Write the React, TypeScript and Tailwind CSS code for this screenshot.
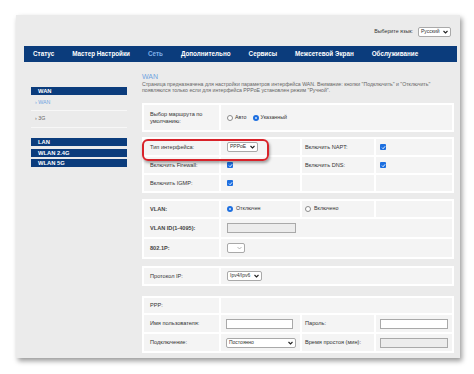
import React from "react";

const font = { fontFamily: '"Liberation Sans", Arial, sans-serif' };

function Chevron() {
  return (
    <svg width="5" height="4" viewBox="0 0 10 7" className="shrink-0">
      <path d="M1 1.5 L5 5.5 L9 1.5" fill="none" stroke="#222" strokeWidth="2.2" />
    </svg>
  );
}

function Select({ text, w, light }: { text: string; w: string; light?: boolean }) {
  return (
    <div className={`${w} h-[10px] bg-white border border-[#a9a9a9] rounded-[2px] flex items-center justify-between px-[2px] text-[5px] text-[#333]`}>
      <span>{text}</span>
      {light ? (
        <svg width="5" height="4" viewBox="0 0 10 7"><path d="M1 1.5 L5 5.5 L9 1.5" fill="none" stroke="#999" strokeWidth="1.4" /></svg>
      ) : (
        <Chevron />
      )}
    </div>
  );
}

function Check() {
  return (
    <span className="w-[6px] h-[6px] rounded-[1px] bg-[#1d6fe0] flex items-center justify-center">
      <svg width="5" height="5" viewBox="0 0 10 10">
        <path d="M2 5.2 L4.2 7.4 L8.2 2.6" fill="none" stroke="white" strokeWidth="1.8" />
      </svg>
    </span>
  );
}

function Radio({ on }: { on?: boolean }) {
  return on ? (
    <span className="w-[6px] h-[6px] rounded-full bg-[#1d6fe0] flex items-center justify-center">
      <span className="w-[2px] h-[2px] rounded-full bg-[#cfe0fb]" />
    </span>
  ) : (
    <span className="w-[6px] h-[6px] rounded-full bg-white border border-[#8a8a8a]" />
  );
}

function Input({ w, gray }: { w: string; gray?: boolean }) {
  return <div className={`${w} h-[10px] border border-[#a9a9a9] ${gray ? "bg-[#ececec]" : "bg-white"}`} />;
}

const cell = "bg-[#f4f4f4] flex items-center";
const lab = `${cell} pl-[6px] text-[5.6px] text-[#333]`;
const lab2 = `${cell} pl-[3px] text-[5.6px] text-[#333]`;
const val = `${cell} pl-[6px]`;
const val2 = `${cell} pl-[4px]`;
const cols = "grid grid-cols-[75px_79px_72px_76px] gap-[2px]";

export default function App() {
  return (
    <div className="min-h-screen bg-white pt-[15px] pl-[16px]" style={font}>
      <div className="w-[444px] h-[343px] bg-[#ebebeb] shadow-[2px_3px_5px_rgba(0,0,0,0.4)] flex flex-col">
        {/* language */}
        <div className="h-[31px] flex items-center justify-end pr-[9px] gap-[5px] pt-[2px]">
          <span className="text-[5.3px] text-[#333]">Выберите язык:</span>
          <Select text="Русский" w="w-[33px]" />
        </div>

        {/* top menu */}
        <div className="ml-[8px] mr-[3px] h-[16px] bg-[#0b3c7c] flex items-center pl-[9px] gap-[18px] text-[6.3px] font-bold text-white">
          <span>Статус</span>
          <span>Мастер Настройки</span>
          <span className="text-[#7fb0ea]">Сеть</span>
          <span>Дополнительно</span>
          <span>Сервисы</span>
          <span>Межсетевой Экран</span>
          <span>Обслуживание</span>
        </div>

        <div className="flex">
          {/* side menu */}
          <div className="ml-[15px] w-[96px] pt-[25px] flex flex-col">
            <div className="h-[8px] bg-[#0b3c7c] text-white font-bold text-[5.8px] pl-[7px] flex items-center">WAN</div>
            <div className="h-[16px] border-b border-[#f7f7f7] flex items-center pl-[4px] text-[5.3px] text-[#6fa3e0]">› WAN</div>
            <div className="h-[17px] border-b border-[#f7f7f7] flex items-center pl-[4px] text-[5.3px] text-[#666]">› 3G</div>
            <div className="mt-[10px] h-[8px] bg-[#0b3c7c] text-white font-bold text-[5.8px] pl-[7px] flex items-center">LAN</div>
            <div className="mt-[3px] h-[8px] bg-[#0b3c7c] text-white font-bold text-[5.8px] pl-[7px] flex items-center">WLAN 2.4G</div>
            <div className="mt-[2px] h-[8px] bg-[#0b3c7c] text-white font-bold text-[5.8px] pl-[7px] flex items-center">WLAN 5G</div>
          </div>

          {/* content */}
          <div className="ml-[15px] w-[313px] pt-[10px] flex flex-col">
            <div className="text-[7px] leading-[9px] text-[#6fa3e0]">WAN</div>
            <div className="mt-[1px] text-[5.2px] leading-[5.5px] text-[#666]">
              Страница предназначена для настройки параметров интерфейса WAN. Внимание: кнопки "Подключить" и "Отключить"
              <br />
              появляются только если для интерфейса PPPoE установлен режим "Ручной".
            </div>

            {/* route */}
            <div className="mt-[10px] w-[312px] bg-white p-[2px]">
              <div className="grid grid-cols-[75px_231px] gap-[2px]">
                <div className={`${lab} h-[25px] leading-[6.5px]`}>
                  Выбор маршрута по
                  <br />
                  умолчанию:
                </div>
                <div className={`${val} gap-[2px] text-[5.3px] text-[#333]`}>
                  <Radio />
                  <span>Авто</span>
                  <span className="ml-[2px]" />
                  <Radio on />
                  <span>Указанный</span>
                </div>
              </div>
            </div>

            {/* interface */}
            <div className="relative mt-[5px] w-[312px] bg-white p-[2px]">
              <div className={`${cols} auto-rows-[16px]`}>
                <div className={lab}>Тип интерфейса:</div>
                <div className={val}>
                  <Select text="PPPoE" w="w-[31px]" />
                </div>
                <div className={lab2}>Включить NAPT:</div>
                <div className={val2}>
                  <Check />
                </div>
                <div className={lab}>Включить Firewall:</div>
                <div className={val}>
                  <Check />
                </div>
                <div className={lab2}>Включить DNS:</div>
                <div className={val2}>
                  <Check />
                </div>
                <div className={lab}>Включить IGMP:</div>
                <div className={val}>
                  <Check />
                </div>
                <div className={cell} />
                <div className={cell} />
              </div>
              <div className="absolute left-[0px] top-[2px] w-[127px] h-[22px] border-2 border-[#d8232a] rounded-[6px] shadow-[1px_2px_3px_rgba(0,0,0,0.35)]" />
            </div>

            {/* vlan */}
            <div className="mt-[6px] w-[312px] bg-white p-[2px]">
              <div className={`${cols} grid-rows-[16px_18px_18px]`}>
                <div className={`${lab} font-bold text-[#444]`}>VLAN:</div>
                <div className={`${val} gap-[3px] text-[5.3px] text-[#333]`}>
                  <Radio on />
                  <span>Отключен</span>
                </div>
                <div className={`${lab2} gap-[3px]`}>
                  <Radio />
                  <span className="text-[5.3px]">Включено</span>
                </div>
                <div className={cell} />
                <div className={`${lab} font-bold text-[#444]`}>VLAN ID(1-4095):</div>
                <div className={`${val} col-span-3`}>
                  <Input w="w-[69px]" gray />
                </div>
                <div className={`${lab} font-bold text-[#444]`}>802.1P:</div>
                <div className={`${val} col-span-3`}>
                  <Select text="" w="w-[18px]" light />
                </div>
              </div>
            </div>

            {/* protocol */}
            <div className="mt-[7px] w-[312px] bg-white p-[2px]">
              <div className={`${cols} grid-rows-[16px]`}>
                <div className={lab}>Протокол IP:</div>
                <div className={`${val} col-span-3`}>
                  <Select text="Ipv4/Ipv6" w="w-[35px]" />
                </div>
              </div>
            </div>

            {/* ppp */}
            <div className="mt-[10px] w-[312px] bg-white p-[2px]">
              <div className={`${cols} grid-rows-[15px_17px_17px]`}>
                <div className={lab}>PPP:</div>
                <div className={`${cell} col-span-3`} />
                <div className={lab}>Имя пользователя:</div>
                <div className={`${cell} pl-[5px]`}>
                  <Input w="w-[67px]" />
                </div>
                <div className={lab2}>Пароль:</div>
                <div className={val2}>
                  <Input w="w-[68px]" />
                </div>
                <div className={lab}>Подключение:</div>
                <div className={`${cell} pl-[5px]`}>
                  <Select text="Постоянно" w="w-[70px]" />
                </div>
                <div className={lab2}>Время простоя (мин):</div>
                <div className={val2}>
                  <Input w="w-[68px]" gray />
                </div>
              </div>
            </div>
          </div>
        </div>
      </div>
    </div>
  );
}
